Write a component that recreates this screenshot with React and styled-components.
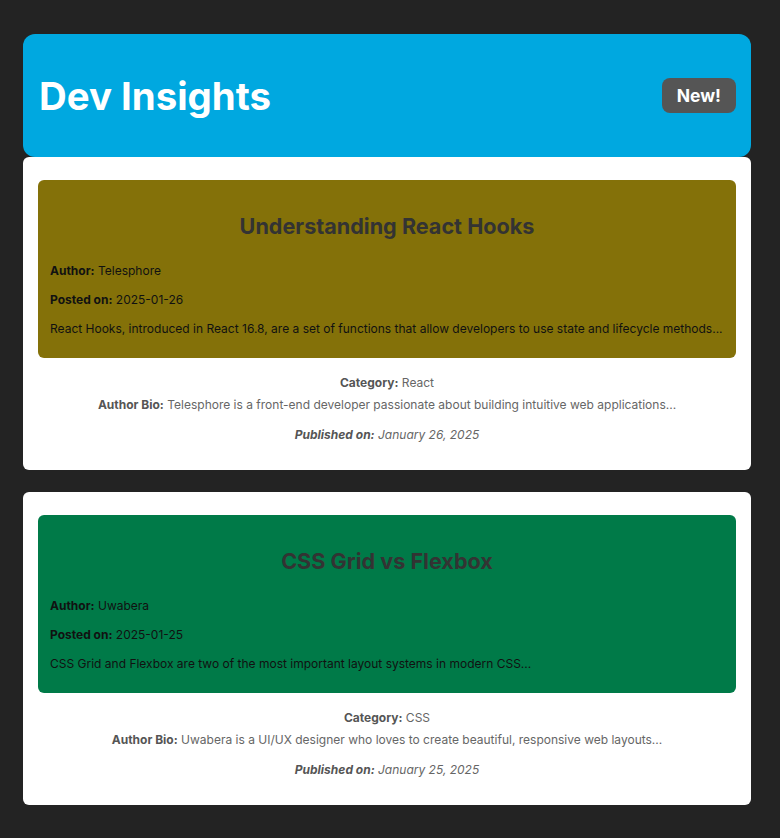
import styled, { createGlobalStyle } from "styled-components";

const posts = [
    {
        title: "Understanding React Hooks",
        author: "Telesphore",
        posted: "2025-01-26",
        excerpt:
            "React Hooks, introduced in React 16.8, are a set of functions that allow developers to use state and lifecycle methods...",
        category: "React",
        bio: "Telesphore is a front-end developer passionate about building intuitive web applications...",
        published: "January 26, 2025",
        color: "#847109",
    },
    {
        title: "CSS Grid vs Flexbox",
        author: "Uwabera",
        posted: "2025-01-25",
        excerpt: "CSS Grid and Flexbox are two of the most important layout systems in modern CSS...",
        category: "CSS",
        bio: "Uwabera is a UI/UX designer who loves to create beautiful, responsive web layouts...",
        published: "January 25, 2025",
        color: "#007A48",
    },
];

const App = () => {
    return (
        <>
            <GlobalStyle />
            <Page>
                <Header>
                    <Title>Dev Insights</Title>
                    <Badge>New!</Badge>
                </Header>
                {posts.map((post, i) => (
                    <Card key={post.title} $first={i === 0}>
                        <PostBox $color={post.color}>
                            <PostTitle>{post.title}</PostTitle>
                            <PostLine>
                                <b>Author:</b> {post.author}
                            </PostLine>
                            <PostLine>
                                <b>Posted on:</b> {post.posted}
                            </PostLine>
                            <PostLine>{post.excerpt}</PostLine>
                        </PostBox>
                        <Meta>
                            <MetaLine>
                                <b>Category:</b> {post.category}
                            </MetaLine>
                            <MetaLine>
                                <b>Author Bio:</b> {post.bio}
                            </MetaLine>
                            <Published>
                                <b>Published on:</b> {post.published}
                            </Published>
                        </Meta>
                    </Card>
                ))}
            </Page>
        </>
    );
};

export default App;

const GlobalStyle = createGlobalStyle`
    html, body {
        margin: 0;
        padding: 0;
        background: #232323;
        font-family: Inter, "Noto Sans", sans-serif;
    }
`;

const Page = styled.div`
    padding: 34px 29px 33px 23px;
    display: flex;
    flex-direction: column;
`;

const Header = styled.header`
    height: 123px;
    box-sizing: border-box;
    padding: 0 15px 0 16px;
    background: #00A8E0;
    border-radius: 12px;
    display: flex;
    align-items: center;
    justify-content: space-between;
`;

const Title = styled.h1`
    margin: 0;
    font-size: 38.4px;
    font-weight: 700;
    color: #ffffff;
`;

const Badge = styled.span`
    background: #555555;
    color: #ffffff;
    font-size: 17.5px;
    font-weight: 700;
    line-height: 35px;
    padding: 0 15px;
    border-radius: 8px;
`;

const Card = styled.article`
    margin-top: ${(p) => (p.$first ? "0" : "22px")};
    background: #ffffff;
    border-radius: 6px;
    padding: 23px 15px 28px;
`;

const PostBox = styled.div`
    background: ${(p) => p.$color};
    border-radius: 6px;
    padding: 33px 12px 21px;
    color: #111111;
`;

const PostTitle = styled.h2`
    margin: 0 0 23px;
    text-align: center;
    font-size: 21.6px;
    line-height: 27px;
    font-weight: 700;
    color: #333333;
`;

const PostLine = styled.p`
    margin: 0 0 13px;
    font-size: 12px;
    line-height: 16px;

    &:last-child {
        margin-bottom: 0;
    }
`;

const Meta = styled.div`
    margin-top: 17px;
    text-align: center;
    color: #666666;
    font-size: 12px;
    line-height: 15px;

    b {
        color: #555555;
    }
`;

const MetaLine = styled.p`
    margin: 0 0 7px;
`;

const Published = styled.p`
    margin: 15px 0 0;
    font-style: italic;
`;
